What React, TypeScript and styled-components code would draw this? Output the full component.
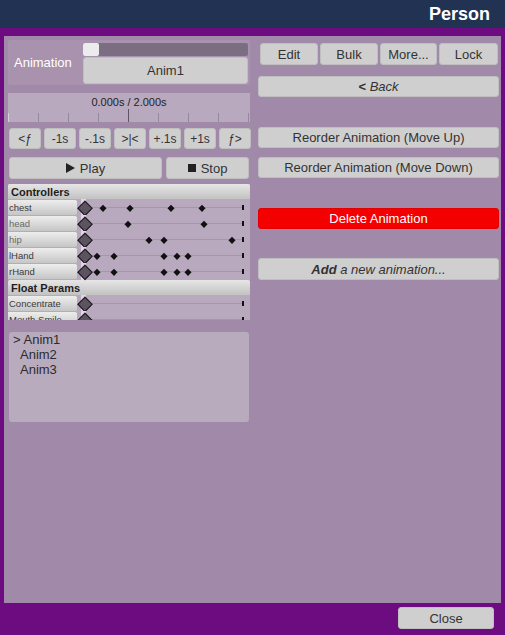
import React from "react";
import styled, { createGlobalStyle } from "styled-components";

const Global = createGlobalStyle`
  html, body { margin: 0; padding: 0; }
  body { font-family: "Liberation Sans", Arial, sans-serif; }
`;

const Page = styled.div`
  width: 505px;
  height: 635px;
  background: #6d0b80;
  display: flex;
  flex-direction: column;
  overflow: hidden;
`;

const Header = styled.div`
  height: 28px;
  background: #223252;
  display: flex;
  align-items: center;
  justify-content: flex-end;
  padding-right: 15px;
  box-sizing: border-box;
`;

const Title = styled.div`
  color: #fff;
  font-weight: bold;
  font-size: 18px;
`;

const Body = styled.div`
  padding: 8px 4px 0 4px;
`;

const Panel = styled.div`
  height: 567px;
  box-sizing: border-box;
  background: #a18aa9;
  padding: 4px 2px 0 4px;
  display: grid;
  grid-template-columns: 242px 241px;
  column-gap: 8px;
  align-items: start;
`;

const Column = styled.div`
  display: flex;
  flex-direction: column;
`;

const Btn = styled.div<{ $h?: number; $mt?: number; $red?: boolean }>`
  height: ${(p) => p.$h ?? 22}px;
  margin-top: ${(p) => p.$mt ?? 0}px;
  box-sizing: border-box;
  background: ${(p) => (p.$red ? "#f40000" : "#cfcfcf")};
  border: 1px solid ${(p) => (p.$red ? "#e20000" : "#bfbfbf")};
  border-radius: 3px;
  color: ${(p) => (p.$red ? "#fff" : "#333")};
  font-size: 13px;
  display: flex;
  align-items: center;
  justify-content: center;
  gap: 5px;
  white-space: nowrap;
  flex: 0 0 auto;
`;

/* Animation header block */
const AnimBlock = styled.div`
  height: 45px;
  box-sizing: border-box;
  background: #a892ae;
  border-radius: 2px;
  display: flex;
  padding: 3px 2px 1px 0;
`;

const AnimLabel = styled.div`
  width: 75px;
  box-sizing: border-box;
  color: #fff;
  font-size: 13px;
  display: flex;
  align-items: center;
  padding: 0 0 2px 6px;
`;

const AnimRight = styled.div`
  flex: 1;
  display: flex;
  flex-direction: column;
`;

const SliderTrack = styled.div`
  height: 13px;
  background: #7b6d82;
  border-radius: 2px;
  display: flex;
`;

const SliderThumb = styled.div`
  width: 16px;
  background: #ececec;
  border-radius: 2px;
`;

const Scrubber = styled.div`
  margin-top: 8px;
  height: 29px;
  background: #b9a9bf;
  display: flex;
  flex-direction: column;
  justify-content: space-between;
`;

const ScrubText = styled.div`
  font-size: 11px;
  color: #222;
  text-align: center;
  padding-top: 3px;
`;

const Ticks = styled.div`
  display: flex;
  justify-content: space-between;
  align-items: flex-end;
  width: 241px;
`;

const Tick = styled.div<{ $major?: boolean; $edge?: boolean }>`
  width: 1px;
  height: ${(p) => (p.$major ? 13 : 9)}px;
  background: ${(p) => (p.$major ? "#5e5464" : p.$edge ? "#d8cfdb" : "#958a9b")};
`;

const StepRow = styled.div`
  margin-top: 6px;
  margin-left: 1px;
  display: flex;
  gap: 3px;
`;

const StepBtn = styled(Btn)`
  width: 32px;
  font-size: 12px;
`;

const PlayRow = styled.div`
  margin-top: 8px;
  margin-left: 1px;
  display: grid;
  grid-template-columns: 153px 83px;
  column-gap: 4px;
`;

const Tracks = styled.div`
  margin-top: 5px;
  height: 136px;
  overflow: hidden;
  background: #b9a9bf;
`;

const SectionHead = styled.div`
  height: 15px;
  box-sizing: border-box;
  background: linear-gradient(#e6e6e6, #c2c2c2);
  border-radius: 2px 2px 0 0;
  font-size: 11px;
  font-weight: bold;
  color: #1e1e1e;
  padding-left: 3px;
  display: flex;
  align-items: center;
  margin-bottom: 1px;
`;

const TrackRow = styled.div`
  height: 15px;
  margin-bottom: 1px;
  display: grid;
  grid-template-columns: 69px 1fr;
  column-gap: 1px;
`;

const TrackLabel = styled.div<{ $dim?: boolean }>`
  background: linear-gradient(#ededed, #c6c6c6);
  border-radius: 0 2px 2px 0;
  font-size: 9.5px;
  color: ${(p) => (p.$dim ? "#6a6a6a" : "#3a3a3a")};
  display: flex;
  align-items: center;
  padding-left: 1px;
  overflow: hidden;
  white-space: nowrap;
`;

const Lane = styled.div`
  position: relative;
`;

const Playhead = styled.div`
  position: absolute;
  left: 3px;
  width: 5px;
  top: -1px;
  bottom: -1px;
  background: #e4d4e6;
`;

const LaneLine = styled.div`
  position: absolute;
  left: 7px;
  right: 7px;
  top: 7px;
  height: 1px;
  background: #a398a8;
`;

const EndTick = styled.div`
  position: absolute;
  left: 164px;
  top: 5px;
  width: 2px;
  height: 5px;
  background: #111;
`;

const Key = styled.div<{ $big?: boolean }>`
  position: absolute;
  top: 7.5px;
  width: ${(p) => (p.$big ? 8.5 : 4.5)}px;
  height: ${(p) => (p.$big ? 8.5 : 4.5)}px;
  background: ${(p) => (p.$big ? "#5d5260" : "#111")};
  border: ${(p) => (p.$big ? "1px solid #1a1a1a" : "none")};
  transform: translate(-50%, -50%) rotate(45deg);
`;

const List = styled.div`
  margin-top: 12px;
  margin-left: 1px;
  width: 240px;
  height: 90px;
  box-sizing: border-box;
  background: #b8abbe;
  border-radius: 3px;
  padding: 0 0 0 4px;
  display: flex;
  flex-direction: column;
`;

const ListItem = styled.div<{ $sel?: boolean }>`
  font-size: 13px;
  color: #2c2c2c;
  line-height: 15px;
  padding-left: ${(p) => (p.$sel ? 0 : 7)}px;
`;

const TopRow = styled.div`
  margin-top: 3px;
  margin-left: 2px;
  display: grid;
  grid-template-columns: 58px 58px 57px 59px;
  column-gap: 2px;
`;

const Footer = styled.div`
  display: flex;
  justify-content: flex-end;
  padding: 4px 11px 0 0;
`;

const CloseBtn = styled(Btn)`
  width: 96px;
`;

const Tri = styled.span`
  width: 0;
  height: 0;
  border-top: 5px solid transparent;
  border-bottom: 5px solid transparent;
  border-left: 9px solid #222;
`;

const Sq = styled.span`
  width: 8px;
  height: 8px;
  background: #222;
`;

type Track = { name: string; keys: number[]; dim?: boolean };

const controllers: Track[] = [
  { name: "chest", keys: [0.24, 0.58, 1.1, 1.49] },
  { name: "head", keys: [0.554, 1.517], dim: true },
  { name: "hip", keys: [0.816, 1.003, 1.867], dim: true },
  { name: "lHand", keys: [0.162, 0.37, 1.003, 1.171, 1.31] },
  { name: "rHand", keys: [0.162, 0.37, 1.003, 1.171, 1.31] },
];

const floats: Track[] = [
  { name: "Concentrate", keys: [] },
  { name: "Mouth Smile", keys: [] },
];

const keyLeft = (t: number) => 6.5 + (t / 2) * 158;

function TrackLine({ track }: { track: Track }) {
  return (
    <TrackRow>
      <TrackLabel $dim={track.dim}>{track.name}</TrackLabel>
      <Lane>
        <Playhead />
        <LaneLine />
        <EndTick />
        <Key $big style={{ left: keyLeft(0) }} />
        {track.keys.map((k, i) => (
          <Key key={i} style={{ left: keyLeft(k) }} />
        ))}
      </Lane>
    </TrackRow>
  );
}

export default function App() {
  const steps = ["<ƒ", "-1s", "-.1s", ">|<", "+.1s", "+1s", "ƒ>"];
  return (
    <Page>
      <Global />
      <Header>
        <Title>Person</Title>
      </Header>
      <Body>
        <Panel>
          <Column>
            <AnimBlock>
              <AnimLabel>Animation</AnimLabel>
              <AnimRight>
                <SliderTrack>
                  <SliderThumb />
                </SliderTrack>
                <Btn $h={27} $mt={1}>Anim1</Btn>
              </AnimRight>
            </AnimBlock>
            <Scrubber>
              <ScrubText>0.000s / 2.000s</ScrubText>
              <Ticks>
                {Array.from({ length: 9 }).map((_, i) => (
                  <Tick key={i} $major={i === 4} $edge={i === 0} />
                ))}
              </Ticks>
            </Scrubber>
            <StepRow>
              {steps.map((s) => (
                <StepBtn key={s} $h={21}>{s}</StepBtn>
              ))}
            </StepRow>
            <PlayRow>
              <Btn>
                <Tri /> Play
              </Btn>
              <Btn>
                <Sq /> Stop
              </Btn>
            </PlayRow>
            <Tracks>
              <SectionHead>Controllers</SectionHead>
              {controllers.map((t) => (
                <TrackLine key={t.name} track={t} />
              ))}
              <SectionHead>Float Params</SectionHead>
              {floats.map((t) => (
                <TrackLine key={t.name} track={t} />
              ))}
            </Tracks>
            <List>
              <ListItem $sel>&gt; Anim1</ListItem>
              <ListItem>Anim2</ListItem>
              <ListItem>Anim3</ListItem>
            </List>
          </Column>
          <Column>
            <TopRow>
              <Btn>Edit</Btn>
              <Btn>Bulk</Btn>
              <Btn>More...</Btn>
              <Btn>Lock</Btn>
            </TopRow>
            <Btn $mt={11} $h={21}>
              <span>
                <b>&lt;</b> <i>Back</i>
              </span>
            </Btn>
            <Btn $mt={30} $h={21}>Reorder Animation (Move Up)</Btn>
            <Btn $mt={9} $h={21}>Reorder Animation (Move Down)</Btn>
            <Btn $mt={30} $h={21} $red>Delete Animation</Btn>
            <Btn $mt={29}>
              <i>
                <b>Add</b> a new animation...
              </i>
            </Btn>
          </Column>
        </Panel>
      </Body>
      <Footer>
        <CloseBtn>Close</CloseBtn>
      </Footer>
    </Page>
  );
}
